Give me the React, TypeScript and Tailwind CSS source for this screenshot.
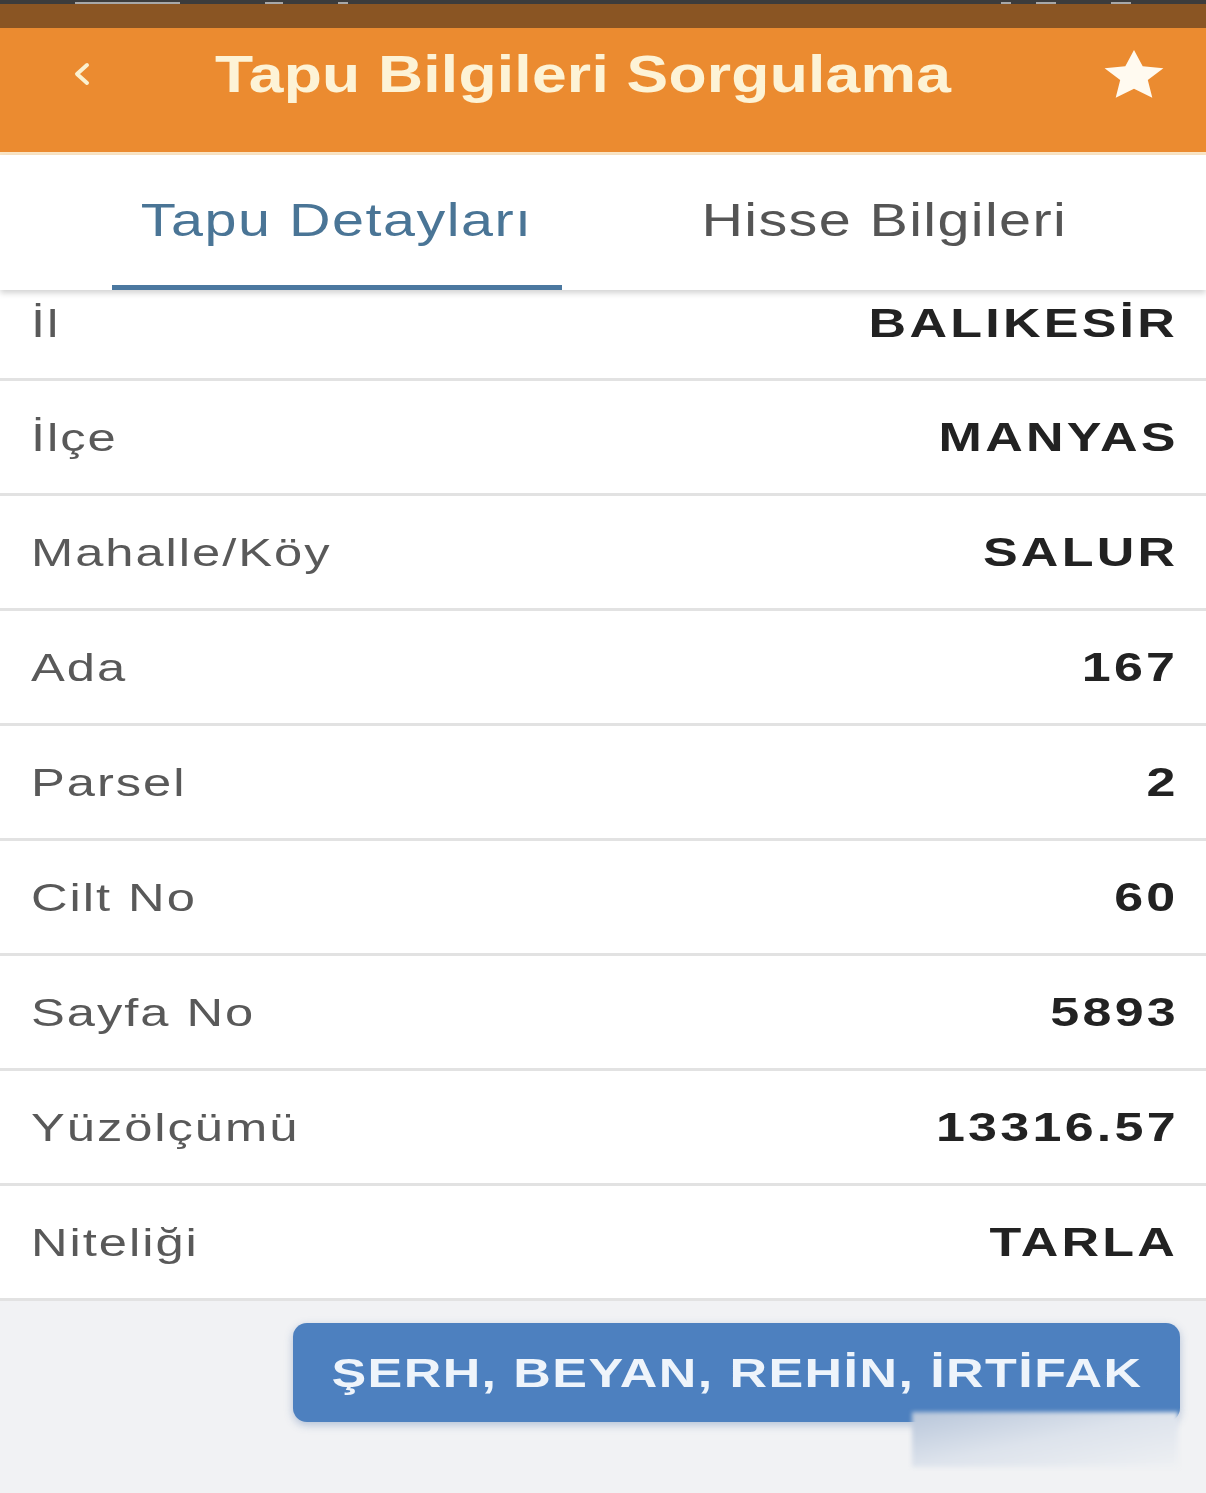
import React from "react";

const rows: { label: string; value: string }[] = [
  { label: "İl", value: "BALIKESİR" },
  { label: "İlçe", value: "MANYAS" },
  { label: "Mahalle/Köy", value: "SALUR" },
  { label: "Ada", value: "167" },
  { label: "Parsel", value: "2" },
  { label: "Cilt No", value: "60" },
  { label: "Sayfa No", value: "5893" },
  { label: "Yüzölçümü", value: "13316.57" },
  { label: "Niteliği", value: "TARLA" },
];

const font = { fontFamily: '"Liberation Sans", Arial, sans-serif' };

function Row({ label, value, first }: { label: string; value: string; first?: boolean }) {
  return (
    <div
      className={
        "flex items-center justify-between border-b-[3px] border-[#e2e2e2] bg-white pl-[31px] pr-[30px] " +
        (first ? "h-[91px] pb-[22px]" : "h-[115px]")
      }
    >
      <span className="inline-block origin-left scale-x-[1.3] text-[39px] leading-none tracking-[1.5px] text-[#595959]">
        {label}
      </span>
      <span className="mr-[-2.5px] inline-block origin-right scale-x-[1.3] text-[40px] font-bold leading-none tracking-[2.5px] text-[#222222]">
        {value}
      </span>
    </div>
  );
}

export default function App() {
  return (
    <div className="relative h-[1493px] w-[1206px] overflow-hidden bg-[#f1f2f4]" style={font}>
      {/* status bar */}
      <div className="flex h-[28px] flex-col">
        <div className="flex h-[4px] items-end bg-[#3c3c3c] px-[75px]">
          <div className="flex w-full items-end">
            <div className="h-[2px] w-[105px] bg-[#a8a8a8]" />
            <div className="ml-[85px] h-[2px] w-[18px] bg-[#a8a8a8]" />
            <div className="ml-[55px] h-[2px] w-[10px] bg-[#a8a8a8]" />
            <div className="ml-auto h-[2px] w-[10px] bg-[#a8a8a8]" />
            <div className="ml-[25px] h-[2px] w-[20px] bg-[#a8a8a8]" />
            <div className="ml-[55px] h-[2px] w-[20px] bg-[#a8a8a8]" />
          </div>
        </div>
        <div className="flex-1 bg-[#8a5523]" />
      </div>

      {/* header */}
      <div className="flex h-[127px] flex-col bg-[#eb8b30]">
        <div className="flex h-[92px] items-center">
          <svg
            className="ml-[70px] h-[28px] w-[24px]"
            viewBox="0 0 24 28"
            fill="none"
            stroke="#fbf1cf"
            strokeWidth="4"
            strokeLinecap="round"
            strokeLinejoin="round"
          >
            <path d="M17 5 L7 14 L17 23" />
          </svg>
          <span className="ml-[121px] inline-block origin-left scale-x-[1.2] text-[52px] font-bold leading-none tracking-[0.2px] text-[#fdf3d6]">
            Tapu Bilgileri Sorgulama
          </span>
          <svg
            className="ml-auto mr-[42px] h-[48px] w-[60px]"
            viewBox="2 2.5 20 18.5"
            preserveAspectRatio="none"
            fill="#fffaf0"
          >
            <path d="M12 2.5l2.9 6.3 6.9.7-5.2 4.6 1.5 6.8L12 17.4l-6.1 3.5 1.5-6.8-5.2-4.6 6.9-.7z" />
          </svg>
        </div>
        <div className="mt-auto h-[3px] bg-[#fbe6c6]" />
      </div>

      {/* tabs */}
      <div className="relative z-10 flex h-[135px] bg-white shadow-[0_3px_6px_rgba(0,0,0,0.18)]">
        <div className="ml-[112px] flex w-[450px] items-center justify-center border-b-[5px] border-[#4b78a0]">
          <span className="inline-block scale-x-[1.25] text-[46px] leading-none tracking-[1.2px] text-[#4a7596]">
            Tapu Detayları
          </span>
        </div>
        <div className="flex flex-1 items-center justify-center pb-[5px]">
          <span className="inline-block scale-x-[1.25] text-[46px] leading-none tracking-[1.1px] text-[#555555]">
            Hisse Bilgileri
          </span>
        </div>
      </div>

      {/* rows */}
      <div className="flex flex-col">
        {rows.map((r, i) => (
          <Row key={r.label} label={r.label} value={r.value} first={i === 0} />
        ))}
      </div>

      {/* button area */}
      <div className="flex justify-end pr-[26px] pt-[22px]">
        <button className="flex h-[99px] w-[887px] items-center justify-center rounded-[14px] bg-[#4d80bf] shadow-[0_3px_8px_rgba(60,100,160,0.35)]">
          <span className="inline-block scale-x-[1.3] text-[40px] font-bold leading-none tracking-[1.1px] text-[#eef4fb]">
            ŞERH, BEYAN, REHİN, İRTİFAK
          </span>
        </button>
      </div>

      {/* privacy blur patch */}
      <div className="absolute left-[912px] top-[1412px] h-[55px] w-[266px] bg-gradient-to-br from-[#b8c6da] via-[#dde3ec] to-[#eef0f3] blur-[2px]" />
    </div>
  );
}
